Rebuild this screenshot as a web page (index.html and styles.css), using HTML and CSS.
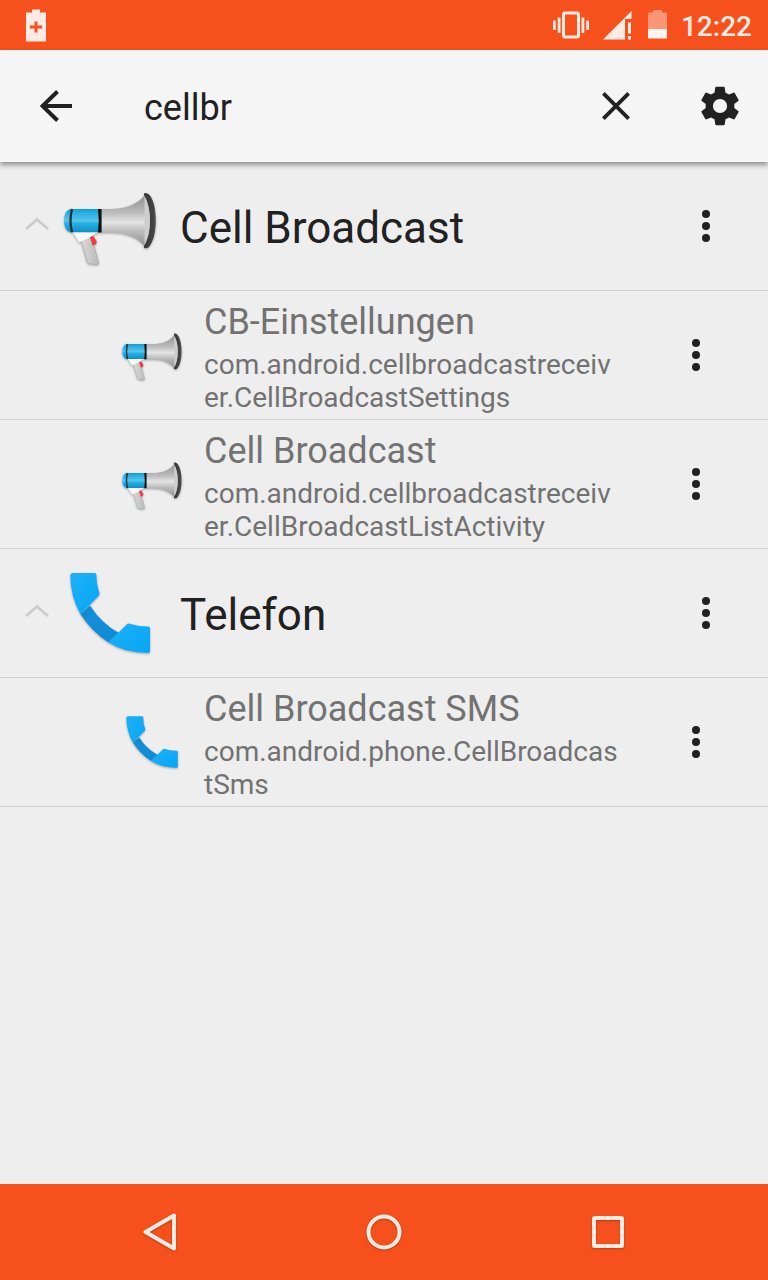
FILE: index.html
```html
<!DOCTYPE html>
<html lang="de">
<head>
<meta charset="utf-8">
<title>cellbr</title>
<link rel="stylesheet" href="styles.css">
</head>
<body>
<svg class="defs" width="0" height="0">
  <defs>
    <linearGradient id="blue" x1="0" y1="0" x2="0" y2="1"><stop offset="0" stop-color="#169bd2"/><stop offset=".15" stop-color="#24aee2"/><stop offset=".52" stop-color="#5bc3ec"/><stop offset=".6" stop-color="#28b2e6"/><stop offset="1" stop-color="#0c8fc8"/></linearGradient>
    <linearGradient id="horn" x1="0" y1="0" x2="0" y2="1"><stop offset="0" stop-color="#8e8e8e"/><stop offset=".35" stop-color="#bcbcbc"/><stop offset=".53" stop-color="#e4e4e4"/><stop offset=".7" stop-color="#bcbcbc"/><stop offset="1" stop-color="#8e8e8e"/></linearGradient>
    <linearGradient id="rim" x1="0" y1="0" x2="1" y2="0"><stop offset="0" stop-color="#383838"/><stop offset=".8" stop-color="#444"/><stop offset="1" stop-color="#606060"/></linearGradient>
    <linearGradient id="grip" x1="0" y1="0" x2="1" y2="0"><stop offset="0" stop-color="#dadada"/><stop offset="1" stop-color="#bababa"/></linearGradient>
    <linearGradient id="ph" x1="0" y1="0" x2="1" y2="1"><stop offset="0" stop-color="#1fb0f8"/><stop offset="1" stop-color="#05a6f6"/></linearGradient>
    <linearGradient id="phd" x1="0" y1="0" x2="1" y2="1"><stop offset="0" stop-color="#0f84c9"/><stop offset=".3" stop-color="#128fd8"/><stop offset="1" stop-color="#0f8ad4"/></linearGradient>
    <symbol id="megaphone" viewBox="0 0 96 96">
      <path d="M19 62L29.500 59L36.300 83.500Q37 86.500 35 86.500L26.500 85.500Q25.500 85 25 83z" fill="url(#grip)" stroke="#a5a5a5" stroke-width=".6"/>
      <path d="M10.500 54H36L26.500 60.500L17 64.500z" fill="#f7f7f7" stroke="#d0d0d0" stroke-width=".5"/>
      <path d="M28.500 59.500L31 58.300L34.300 63.500L33.500 66L30.800 67L29.800 63.500z" fill="#f2393e" stroke="#f2393e" stroke-width="1"/>
      <path d="M9.500 31H37V54.300H9.500C4.700 54.300 2 49 2 42.700S4.700 31 9.500 31z" fill="url(#blue)"/>
      <path d="M10 31Q7 42.700 10 54.300" fill="none" stroke="#20343d" stroke-width="2.300"/>
      <path d="M39 31H48C62 31 75 27 83.500 16.500V69C75 58 62 54.500 48 54.500H39z" fill="url(#horn)"/>
      <path d="M36 31H39.600V54.500H36Q37.500 43 36 31z" fill="#101316"/>
      <path d="M82 17C81.500 13.500 86 15 87.500 17C96 27 96 58 87.500 68C86 71 81 71 82 68C90 55 90 30 82 17z" fill="url(#rim)"/>
      <path d="M82.500 18C89.700 31 89.700 54 82.500 67z" fill="#cecece"/>
    </symbol>
    <symbol id="phone" viewBox="0 0 96 96">
      <path d="M28 40.500Q39 58 57 68L46.500 77.500Q30 67 18.500 49.300z" fill="url(#phd)"/>
      <path d="M10.500 8H32.500Q34.300 8 34.400 10Q34.500 20 37.500 28Q37.800 29.400 36.700 30.700L18.500 49.300Q8.500 32 8.300 10.500Q8.300 8 10.500 8z" fill="url(#ph)"/>
      <path d="M66.500 58.500Q76 61.500 86 61.500Q88 61.600 88 63.500V86Q88 88 86 88Q63 88 46.500 77.500L65 59.200Q65.600 58.300 66.500 58.500z" fill="url(#ph)"/>
    </symbol>
    <symbol id="dots" viewBox="0 0 8 32"><circle cx="4" cy="4" r="4"/><circle cx="4" cy="16" r="4"/><circle cx="4" cy="28" r="4"/></symbol>
    <symbol id="chevron" viewBox="0 0 24 14"><path d="M1 12L12 2.500L23 12" fill="none" stroke="#cbcbcb" stroke-width="2.800"/></symbol>
  </defs>
</svg>
<div class="screen">
  <header class="status">
    <svg class="status-saver" width="20" height="33" viewBox="0 0 20 33"><path d="M0 3.500H6V.5H14V3.500H20V32.500H0z"/><path d="M4 18H16M10 12.500V23.500" stroke="#f6511d" stroke-width="3"/></svg>
    <svg class="status-vibrate" width="36" height="28" viewBox="0 0 36 28"><rect x="10.500" y="2" width="15" height="24" rx="1.500" fill="none" stroke="#ffebe4" stroke-width="3"/><path d="M0 9.500H2.700V19H0zM4.700 6.500H7.500V22H4.700zM28.500 6.500H31.300V22H28.500zM33.300 9.500H36V19H33.300z"/></svg>
    <svg class="status-signal" width="29" height="29" viewBox="0 0 29 29"><path d="M0 28.500L28.500 0V8H22V28.500zM25 11.500H28V22.500H25zM25 25H28V28.500H25z"/></svg>
    <svg class="status-battery" width="19" height="29" viewBox="0 0 19 29"><path d="M0 2.500H5V0H14V2.500H19V19H0z" fill="#fa9576"/><path d="M0 19H19V28.500H0z" fill="#fff3ed"/></svg>
    <span class="clock">12:22</span>
  </header>
  <div class="toolbar">
    <svg class="back" width="32" height="32" viewBox="0 0 32 32"><path d="M17.500 1.500L2.500 16L17.500 30.500M2.500 16H32" fill="none" stroke="#212121" stroke-width="4"/></svg>
    <span class="query">cellbr</span>
    <svg class="clear" width="28" height="28" viewBox="0 0 28 28"><path d="M1.400 1.400L26.600 26.600M26.600 1.400L1.400 26.600" stroke="#212121" stroke-width="3.800"/></svg>
    <svg class="gear" width="46" height="46" viewBox="0 0 24 24"><path fill="#212121" d="M19.430 12.980c.04-.32.07-.64.07-.98s-.03-.66-.07-.98l2.110-1.650c.19-.15.24-.42.12-.64l-2-3.460c-.12-.22-.39-.3-.61-.22l-2.490 1c-.52-.4-1.080-.73-1.690-.98l-.38-2.650C14.460 2.180 14.250 2 14 2h-4c-.25 0-.46.18-.49.42l-.38 2.650c-.61.25-1.170.59-1.690.98l-2.490-1c-.23-.09-.49 0-.61.22l-2 3.460c-.13.22-.07.49.12.64l2.110 1.650c-.04.32-.07.65-.07.98s.03.66.07.98l-2.110 1.650c-.19.15-.24.42-.12.64l2 3.460c.12.22.39.3.61.22l2.490-1c.52.4 1.080.73 1.690.98l.38 2.650c.03.24.24.42.49.42h4c.25 0 .46-.18.49-.42l.38-2.650c.61-.25 1.170-.59 1.690-.98l2.490 1c.23.09.49 0 .61-.22l2-3.460c.12-.22.07-.49-.12-.64z"/><circle cx="12" cy="12" r="3.700" fill="#f5f5f5"/></svg>
  </div>
  <main class="list">
    <div class="row group">
      <svg class="chevron"><use href="#chevron"/></svg>
      <svg class="app-icon"><use href="#megaphone"/></svg>
      <span class="group-title">Cell Broadcast</span>
      <svg class="more"><use href="#dots"/></svg>
    </div>
    <div class="row child">
      <svg class="app-icon"><use href="#megaphone"/></svg>
      <div class="info"><div class="name">CB-Einstellungen</div><div class="component">com.android.cellbroadcastreceiv<br>er.CellBroadcastSettings</div></div>
      <svg class="more"><use href="#dots"/></svg>
    </div>
    <div class="row child">
      <svg class="app-icon"><use href="#megaphone"/></svg>
      <div class="info"><div class="name">Cell Broadcast</div><div class="component">com.android.cellbroadcastreceiv<br>er.CellBroadcastListActivity</div></div>
      <svg class="more"><use href="#dots"/></svg>
    </div>
    <div class="row group">
      <svg class="chevron"><use href="#chevron"/></svg>
      <svg class="app-icon"><use href="#phone"/></svg>
      <span class="group-title">Telefon</span>
      <svg class="more"><use href="#dots"/></svg>
    </div>
    <div class="row child">
      <svg class="app-icon"><use href="#phone"/></svg>
      <div class="info"><div class="name">Cell Broadcast SMS</div><div class="component">com.android.phone.CellBroadcas<br>tSms</div></div>
      <svg class="more"><use href="#dots"/></svg>
    </div>
  </main>
  <nav class="navbar">
    <svg width="40" height="40" viewBox="0 0 40 40"><path d="M5.500 20L34 3.500V36.500z"/></svg>
    <svg width="40" height="40" viewBox="0 0 40 40"><circle cx="20" cy="20" r="15.500"/></svg>
    <svg width="40" height="40" viewBox="0 0 40 40"><rect x="6" y="6" width="28" height="28" rx=".5"/></svg>
  </nav>
</div>
</body>
</html>
```

FILE: styles.css
```css
body {
  margin: 0;
  font-family: Roboto, sans-serif;
  color: #212121;
}
.defs { position: absolute; }
svg { display: block; flex: none; }
.screen {
  display: flex;
  flex-direction: column;
  width: 768px;
  height: 1280px;
  background: #eeeeee;
  overflow: hidden;
}
.status {
  display: flex;
  align-items: center;
  box-sizing: border-box;
  height: 50px;
  padding: 0 16px 0 26px;
  background: #f6511d;
  fill: #ffebe4;
  flex: none;
}
.status-vibrate { margin-left: auto; }
.status-signal { margin-left: 14px; }
.status-battery { margin-left: 16px; margin-bottom: 1px; }
.clock {
  margin-left: 14px;
  padding-top: 3px;
  font-size: 28px;
  line-height: 34px;
  font-weight: 500;
  color: #ffebe4;
}
.toolbar {
  display: flex;
  align-items: center;
  box-sizing: border-box;
  height: 112px;
  padding: 0 25px 0 40px;
  background: #f5f5f5;
  box-shadow: 0 3px 5px rgba(0, 0, 0, .4);
  z-index: 1;
  flex: none;
}
.query {
  flex: 1;
  margin-left: 72px;
  padding-top: 3px;
  font-size: 36px;
  line-height: 42px;
}
.clear { margin-right: 67px; }
.list { flex: 1; }
.row {
  display: flex;
  align-items: center;
  box-sizing: border-box;
  height: 129px;
  border-bottom: 1px solid #cfcfcf;
}
.group { padding: 0 58px 0 25px; }
.chevron { width: 24px; height: 14px; margin: 0 13px 4px 0; }
.app-icon { width: 96px; height: 96px; filter: drop-shadow(0 1px 1px rgba(0, 0, 0, .3)); }
.group-title {
  flex: 1;
  margin-left: 22px;
  padding-top: 4px;
  font-size: 44px;
  line-height: 52px;
}
.more { width: 8px; height: 32px; fill: #212121; }
.child { padding: 0 68px 0 121px; }
.child .app-icon { width: 62px; height: 62px; }
.info { flex: 1; margin-left: 21px; padding-top: 4px; color: #727272; white-space: nowrap; }
.name { font-size: 36px; line-height: 42px; margin-bottom: 5px; }
.component { font-size: 28px; line-height: 33px; }
.navbar {
  display: flex;
  justify-content: center;
  align-items: center;
  gap: 184px;
  height: 96px;
  background: #f6511d;
  fill: none;
  stroke: #ffebe4;
  stroke-width: 4;
  stroke-linejoin: round;
  flex: none;
}
.navbar svg { filter: drop-shadow(0 1px 1px rgba(0, 0, 0, .25)); }
```
